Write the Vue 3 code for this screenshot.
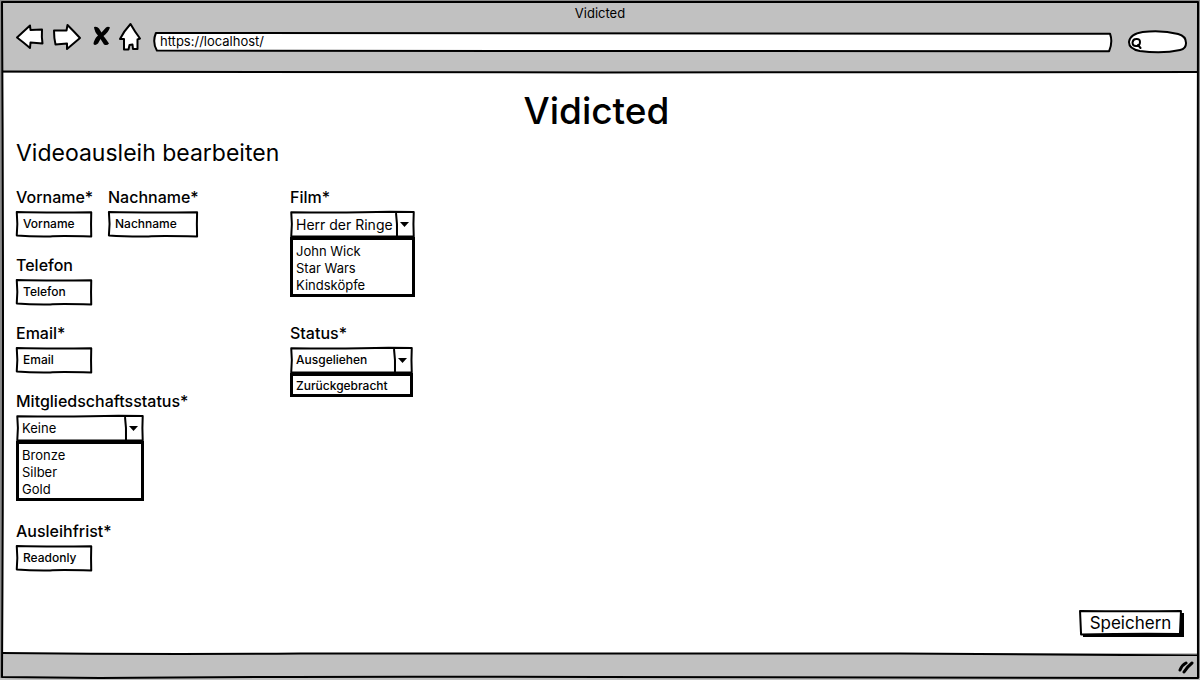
<script setup>
import { h, ref } from 'vue'

const outlines = {
  field: 'M1 4 Q40 7 99 5 Q98.500 50 99 98 Q55 95 45 98 Q20 99 1 94 Q2.500 50 1 4 Z',
  select: 'M1 5 Q50 7 80 3 L99 4 Q98.500 50 99 98 L1 98 Q2 50 1 5 Z',
  address: 'M0.2 5 Q45 4 99.8 9 Q100.1 50 99.7 96 Q55 98 40 95 L0.3 93 Q-0.2 50 0.2 5 Z',
  button: 'M1 4 Q50 6 99 4 L98 92 Q50 90 2 94 Z',
}

const Sketch = (props) =>
  h('svg', { class: 'sketch', viewBox: '0 0 100 100', preserveAspectRatio: 'none', 'aria-hidden': 'true' }, [
    h('path', { d: outlines[props.shape], 'vector-effect': 'non-scaling-stroke' }),
  ])
Sketch.props = ['shape']

const url = ref('https://localhost/')
const query = ref('')

const people = [
  [
    { id: 'vorname', label: 'Vorname*', value: 'Vorname' },
    { id: 'nachname', label: 'Nachname*', value: 'Nachname', wide: true },
  ],
  [{ id: 'telefon', label: 'Telefon', value: 'Telefon' }],
  [{ id: 'email', label: 'Email*', value: 'Email' }],
]
const membership = { id: 'mitglied', label: 'Mitgliedschaftsstatus*', value: 'Keine', options: ['Bronze', 'Silber', 'Gold'] }
const rental = [
  { id: 'film', label: 'Film*', value: 'Herr der Ringe', options: ['John Wick', 'Star Wars', 'Kindsköpfe'] },
  { id: 'status', label: 'Status*', value: 'Ausgeliehen', options: ['Zurückgebracht'] },
]
</script>

<template>
  <div class="window">
    <header class="chrome">
      <div class="title">Vidicted</div>
      <div class="toolbar">
        <button class="tool" type="button" aria-label="Zurück">
          <svg width="28" height="28" viewBox="0 0 28 28"><path class="shape" d="M1 14.5 L14 2.5 L14.5 7 L26 6.500 Q25.500 14 26.500 20.500 L14.500 19.500 L14 25 Q7 19 1 14.500 Z" /></svg>
        </button>
        <button class="tool" type="button" aria-label="Vor">
          <svg width="28" height="28" viewBox="0 0 28 28"><path class="shape" d="M1 7.500 L13.500 7.500 L14.500 2 Q21 8.500 27 15 L14 26 L14 20.500 L2.500 21.500 Q1 15 1 7.500 Z" /></svg>
        </button>
        <button class="tool" type="button" aria-label="Abbrechen">
          <svg width="20" height="28" viewBox="0 0 20 28"><path class="cross" d="M4 4 Q7 3 9 5.500 L11.500 9.500 L16 4.500 Q18 3 20 4.500 Q18 10 13.500 13 Q16 16 19 20.500 Q17 23 14 21.500 L10.500 16 L8 20.500 Q5 23 3.500 21 Q4 16 8 12.500 Q4.500 9 4 4 Z" /></svg>
        </button>
        <button class="tool" type="button" aria-label="Startseite">
          <svg width="26" height="28" viewBox="0 0 26 28"><path class="shape" d="M11.500 1 Q16 9 21 15.500 L18.500 16.500 L18.500 26 L14 26 L13.500 21.500 L10.500 22 L9.500 26.500 L5 26.500 L5 16 L1 16 Q5 8 11.500 1 Z" /></svg>
        </button>
        <div class="address">
          <Sketch shape="address" />
          <input v-model="url" type="text" aria-label="Adresse" />
        </div>
        <div class="search">
          <svg class="sketch" viewBox="0 0 60 24" preserveAspectRatio="none" aria-hidden="true">
            <path vector-effect="non-scaling-stroke" d="M15 2 Q35 0 51 4 Q59 6 59 13 Q59 19 53 20 Q35 24 12 21 Q1 19 1 12 Q2 4 15 2 Z" />
          </svg>
          <svg class="lens" width="12" height="14" viewBox="0 0 12 14" aria-hidden="true"><path d="M5 4 Q9 3.500 9 7 Q9 11 5 11 Q1.500 11 1.500 7.500 Q2 4 5 4 M7 10 L9.500 13" /></svg>
          <input v-model="query" type="text" aria-label="Suche" />
        </div>
      </div>
      <svg class="rule" viewBox="0 0 1200 4" preserveAspectRatio="none" aria-hidden="true"><path vector-effect="non-scaling-stroke" d="M2 1.500 Q300 3 600 2.500 T1198 2" /></svg>
    </header>

    <main class="page">
      <h1>Vidicted</h1>
      <h2>Videoausleih bearbeiten</h2>
      <form class="form" @submit.prevent>
        <div class="columns">
          <div class="column person">
            <div v-for="(row, i) in people" :key="i" class="row">
              <div v-for="f in row" :key="f.id" class="field">
                <label :for="f.id">{{ f.label }}</label>
                <div class="box" :class="{ wide: f.wide }">
                  <Sketch shape="field" />
                  <input :id="f.id" type="text" :value="f.value" />
                </div>
              </div>
            </div>
            <div class="field mitglied">
              <label :for="membership.id">{{ membership.label }}</label>
              <div class="box">
                <Sketch shape="select" />
                <select :id="membership.id"><option>{{ membership.value }}</option></select>
                <svg class="arrow" width="20" height="26" viewBox="0 0 20 26" aria-hidden="true"><path class="split" d="M1 2 Q2.500 13 2 25" /><path d="M5 11 L14 11 L9.500 16 Z" /></svg>
              </div>
              <ul>
                <li v-for="o in membership.options" :key="o">{{ o }}</li>
              </ul>
            </div>
            <div class="field">
              <label for="frist">Ausleihfrist*</label>
              <div class="box">
                <Sketch shape="field" />
                <input id="frist" type="text" value="Readonly" readonly />
              </div>
            </div>
          </div>
          <div class="column rental">
            <div v-for="f in rental" :key="f.id" class="field" :class="f.id">
              <label :for="f.id">{{ f.label }}</label>
              <div class="box">
                <Sketch shape="select" />
                <select :id="f.id"><option>{{ f.value }}</option></select>
                <svg class="arrow" width="20" height="26" viewBox="0 0 20 26" aria-hidden="true"><path class="split" d="M1 2 Q2.500 13 2 25" /><path d="M5 11 L14 11 L9.500 16 Z" /></svg>
              </div>
              <ul>
                <li v-for="o in f.options" :key="o">{{ o }}</li>
              </ul>
            </div>
          </div>
        </div>
        <button class="save" type="submit"><Sketch shape="button" /><span>Speichern</span></button>
      </form>
    </main>

    <footer class="status-bar">
      <svg class="rule" viewBox="0 0 1200 4" preserveAspectRatio="none" aria-hidden="true"><path vector-effect="non-scaling-stroke" d="M2 1 Q150 2.500 300 1.500 T900 1.500 L1198 3.500" /></svg>
      <svg class="grip" width="18" height="14" viewBox="0 0 18 14" aria-hidden="true"><path d="M2 10 Q4 5 8 3 M6 12 Q9 7 14 3" /></svg>
    </footer>
    <svg class="sketch frame" viewBox="0 0 1200 680" preserveAspectRatio="none" aria-hidden="true">
      <path class="edge" vector-effect="non-scaling-stroke" d="M1 2 L1 678 M0 1 L1200 1 M1199 2 L1199 678" />
      <path vector-effect="non-scaling-stroke" d="M2 2 L1198 2 Q1197 340 1198 678 L600 677 Q300 676 100 678 L2 677 Q4 340 2 2 Z" />
    </svg>
  </div>
</template>

<style>
body {
  margin: 0;
}
</style>

<style scoped>
.window {
  position: relative;
  display: flex;
  flex-direction: column;
  min-height: 100vh;
  box-sizing: border-box;
  overflow: hidden;
  background: #fff;
  color: #000;
  font-family: Inter, "Liberation Sans", sans-serif;
  font-size: 13px;
}
button,
input,
select {
  margin: 0;
  padding: 0;
  border: 0;
  background: transparent;
  color: inherit;
  font: inherit;
  outline: none;
}
.sketch {
  position: absolute;
  inset: 0;
  width: 100%;
  height: 100%;
  overflow: visible;
  pointer-events: none;
}
.sketch :deep(path) {
  fill: #fff;
  stroke: #000;
  stroke-width: 2px;
  stroke-linejoin: round;
}
.frame :deep(path) {
  fill: none;
}
.frame :deep(.edge) {
  stroke: #8a8a8a;
}
.rule {
  position: absolute;
  left: 0;
  width: 100%;
  height: 4px;
}
.rule path {
  fill: none;
  stroke: #000;
  stroke-width: 2px;
}
.chrome {
  position: relative;
  height: 73px;
  background: #c1c1c1;
}
.chrome .rule {
  bottom: -1px;
}
.title {
  padding-top: 4px;
  line-height: 18px;
  text-align: center;
}
.toolbar {
  display: flex;
  align-items: center;
  gap: 9px;
  height: 30px;
  padding: 0 13px 0 16px;
}
.tool {
  display: flex;
}
.tool svg {
  overflow: visible;
}
.shape {
  fill: #fff;
  stroke: #000;
  stroke-width: 2px;
  stroke-linejoin: round;
}
.cross {
  fill: #000;
}
.address {
  position: relative;
  flex: 1;
  height: 20px;
  margin-top: 9px;
}
.address input {
  position: relative;
  width: 100%;
  height: 20px;
  padding: 0 6px 2px;
  box-sizing: border-box;
}
.search {
  position: relative;
  display: flex;
  align-items: center;
  width: 59px;
  height: 24px;
  margin-top: 9px;
  margin-left: 7px;
  padding-left: 3px;
  box-sizing: border-box;
}
.search input {
  position: relative;
  flex: 1;
  min-width: 0;
}
.lens {
  position: relative;
}
.lens path {
  fill: none;
  stroke: #000;
  stroke-width: 2px;
  stroke-linecap: round;
}
.page {
  display: flex;
  flex: 1;
  flex-direction: column;
  padding: 15px 18px 17px 16px;
}
h1 {
  margin: 0;
  padding-right: 5px;
  font-size: 37px;
  font-weight: 500;
  line-height: 46px;
  text-align: center;
}
h2 {
  margin: 4px 0 17px;
  font-size: 23px;
  font-weight: 400;
  line-height: 30px;
}
.form {
  display: flex;
  flex: 1;
  flex-direction: column;
}
.columns {
  display: flex;
  flex: 1;
}
.column {
  display: flex;
  flex-direction: column;
  gap: 16px;
}
.person {
  width: 274px;
}
.rental {
  gap: 24px;
}
.row {
  display: flex;
  gap: 16px;
}
.field {
  width: max-content;
}
.row .field {
  width: auto;
}
label {
  display: block;
  margin-bottom: 2px;
  font-size: 16px;
  font-weight: 500;
  line-height: 24px;
  white-space: nowrap;
}
.box {
  position: relative;
  width: 76px;
  height: 26px;
}
.wide {
  width: 90px;
}
.row .field:first-child {
  width: 76px;
}
.box input {
  position: relative;
  width: 100%;
  height: 26px;
  padding: 0 4px 1px 7px;
  box-sizing: border-box;
  font-size: 12px;
  font-weight: 500;
}
.box select {
  position: relative;
  appearance: none;
  width: 100%;
  height: 26px;
  padding: 0 18px 0 6px;
  font-size: 13px;
}
.film .box select {
  font-size: 14px;
}
.status .box select {
  padding-bottom: 1px;
  font-size: 12px;
  font-weight: 500;
}
.arrow {
  position: absolute;
  top: 0;
  right: 0;
  pointer-events: none;
}
.split {
  fill: none;
  stroke: #000;
  stroke-width: 2px;
}
ul {
  margin: 0;
  padding: 3px 3px 0;
  border: 3px solid #000;
  list-style: none;
  line-height: 17px;
}
.mitglied .box,
.mitglied ul {
  width: 128px;
  box-sizing: border-box;
}
.mitglied ul {
  margin-bottom: 2px;
}
.film .box,
.film ul {
  width: 125px;
  box-sizing: border-box;
}
.status .box,
.status ul {
  width: 123px;
  box-sizing: border-box;
}
.status ul {
  padding-top: 1px;
  font-size: 12px;
  font-weight: 500;
}
.save {
  position: relative;
  align-self: flex-end;
  width: 103px;
  height: 26px;
  font-size: 17px;
}
.save::before {
  position: absolute;
  inset: 3px -2px -1px 4px;
  background: #000;
  content: "";
}
.save span {
  position: relative;
}
.status-bar {
  position: relative;
  display: flex;
  align-items: center;
  justify-content: flex-end;
  height: 27px;
  padding-right: 4px;
  background: #c1c1c1;
}
.status-bar .rule {
  top: -1px;
}
.grip path {
  fill: none;
  stroke: #000;
  stroke-width: 3px;
  stroke-linecap: round;
}
</style>
